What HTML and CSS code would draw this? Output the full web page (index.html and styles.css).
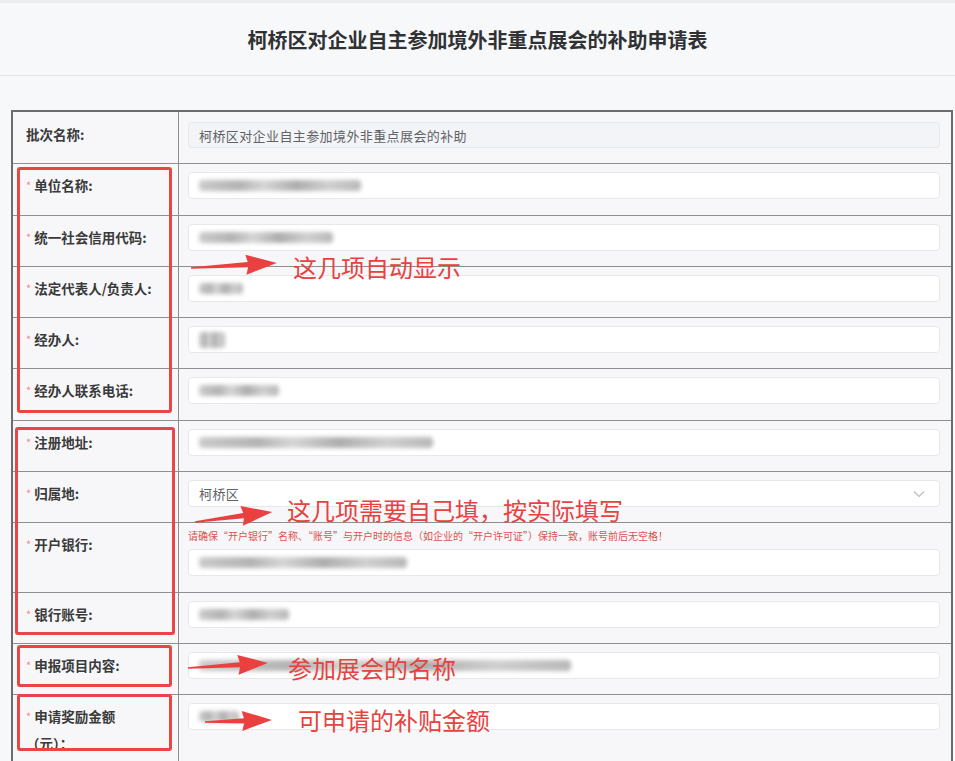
FILE: index.html
```html
<!DOCTYPE html>
<html lang="zh-CN">
<head>
    <meta charset="UTF-8">
    <title>补助申请表</title>
    <link rel="stylesheet" href="styles.css">
</head>
<body>
    <header class="top">
        <h1>柯桥区对企业自主参加境外非重点展会的补助申请表</h1>
    </header>
    <main class="page">
        <table class="form">
            <tr class="first">
                <td class="label">批次名称:</td>
                <td><div class="field readonly">柯桥区对企业自主参加境外非重点展会的补助</div></td>
            </tr>
            <tr>
                <td class="label"><i>*</i>单位名称:</td>
                <td><div class="field"><span class="blur" style="width:162px"></span></div></td>
            </tr>
            <tr>
                <td class="label"><i>*</i>统一社会信用代码:</td>
                <td><div class="field"><span class="blur" style="width:134px"></span></div></td>
            </tr>
            <tr>
                <td class="label"><i>*</i>法定代表人/负责人:</td>
                <td><div class="field"><span class="blur" style="width:44px"></span></div></td>
            </tr>
            <tr>
                <td class="label"><i>*</i>经办人:</td>
                <td><div class="field"><span class="blur short" style="width:26px"></span></div></td>
            </tr>
            <tr>
                <td class="label"><i>*</i>经办人联系电话:</td>
                <td><div class="field"><span class="blur" style="width:80px"></span></div></td>
            </tr>
            <tr>
                <td class="label"><i>*</i>注册地址:</td>
                <td><div class="field"><span class="blur" style="width:234px"></span></div></td>
            </tr>
            <tr>
                <td class="label"><i>*</i>归属地:</td>
                <td>
                    <div class="field select">
                        <span>柯桥区</span>
                        <svg width="12" height="8" viewBox="0 0 12 8"><path d="M1 1.5 L6 6.5 L11 1.5" fill="none" stroke="#b9bcc2" stroke-width="1.2"/></svg>
                    </div>
                </td>
            </tr>
            <tr>
                <td class="label"><i>*</i>开户银行:</td>
                <td>
                    <p class="tip">请确保“开户银行”名称、“账号”与开户时的信息（如企业的“开户许可证”）保持一致，账号前后无空格！</p>
                    <div class="field"><span class="blur" style="width:208px"></span></div>
                </td>
            </tr>
            <tr>
                <td class="label"><i>*</i>银行账号:</td>
                <td><div class="field"><span class="blur" style="width:90px"></span></div></td>
            </tr>
            <tr>
                <td class="label"><i>*</i>申报项目内容:</td>
                <td><div class="field"><span class="blur" style="width:372px"></span></div></td>
            </tr>
            <tr>
                <td class="label"><i>*</i>申请奖励金额<br>（元）：</td>
                <td><div class="field"><span class="blur" style="width:40px"></span></div></td>
            </tr>
        </table>
    </main>

    <div class="notes">
        <div class="box b1"></div>
        <div class="box b2"></div>
        <div class="box b3"></div>
        <div class="box b4"></div>
        <svg class="arrows" width="955" height="761" viewBox="0 0 955 761">
            <g fill="#ea4040">
                <polygon transform="translate(191 268) rotate(-3.4)" points="0,-0.7 57,-2.6 55,-10 86,0 55,10 57,2.6 0,0.7"/>
                <polygon transform="translate(195 522) rotate(-7.4)" points="0,-0.7 49,-2.6 47,-10 78,0 47,10 49,2.6 0,0.7"/>
                <polygon transform="translate(188 668) rotate(-3.6)" points="0,-0.7 52,-2.6 50,-10 80,0 50,10 52,2.6 0,0.7"/>
                <polygon transform="translate(205 722) rotate(-1.7)" points="0,-0.7 39,-2.6 37,-10 67,0 37,10 39,2.6 0,0.7"/>
            </g>
        </svg>
        <p class="note n1">这几项自动显示</p>
        <p class="note n2">这几项需要自己填，按实际填写</p>
        <p class="note n3">参加展会的名称</p>
        <p class="note n4">可申请的补贴金额</p>
    </div>
</body>
</html>
```

FILE: styles.css
```css
body {
    margin: 0;
    padding: 0;
    background-color: #f7f8fa;
    font-family: "Noto Sans CJK SC", "Liberation Sans", sans-serif;
    color: #333;
    position: relative;
    height: 761px;
    overflow: hidden;
}

.top {
    border-top: 3px solid #ececef;
    border-bottom: 1px solid #e3e4e8;
    height: 72px;
    display: flex;
    align-items: center;
    justify-content: center;
}

.top h1 {
    margin: 0;
    font-size: 20px;
    font-weight: 700;
    color: #303133;
}

.page {
    padding: 34px 2px 0 11px;
}

.form {
    width: 942px;
    table-layout: fixed;
    border-collapse: collapse;
    border: 2px solid #6c6c6c;
    background-color: #f7f7f9;
}

.form td {
    border: 1px solid #8f8f8f;
    padding: 8px 11px 15.3px 9px;
    vertical-align: top;
}

.form tr.first td {
    padding-top: 9px;
}

.form td.label {
    width: 142px;
    padding-left: 13px;
    padding-right: 10px;
    font-size: 13.5px;
    font-weight: 700;
    line-height: 27px;
    color: #3a3a3a;
    white-space: nowrap;
}

.label i {
    font-style: normal;
    font-weight: 400;
    color: #f08a8a;
    font-size: 11px;
    margin-right: 3px;
    vertical-align: 1px;
}

.field {
    box-sizing: border-box;
    height: 27px;
    background-color: #fff;
    border: 1px solid #e6e8ec;
    border-radius: 4px;
    padding: 0 11px 0 10px;
    display: flex;
    align-items: center;
    font-size: 13px;
    letter-spacing: 0.4px;
    color: #606266;
}

.field.readonly {
    background-color: #f3f4f7;
    height: 26px;
    margin-top: 1px;
}

.field.select {
    justify-content: space-between;
    padding-right: 14px;
}

.blur {
    display: inline-block;
    height: 11px;
    background: linear-gradient(90deg, #cbcbcb 0%, #b3b3b3 25%, #d6d6d6 40%, #adadad 60%, #d0d0d0 80%, #b8b8b8 100%);
    filter: blur(2px);
    border-radius: 4px;
}

.blur.short {
    height: 16px;
}

.tip {
    margin: -2px 0 6px 0;
    font-size: 10px;
    line-height: 14px;
    color: #e0504e;
    white-space: nowrap;
}

.notes {
    position: absolute;
    left: 0;
    top: 0;
    width: 955px;
    height: 761px;
    pointer-events: none;
}

.box {
    position: absolute;
    border: 3px solid #ea4545;
    border-radius: 3px;
    box-sizing: border-box;
}

.b1 { left: 17px; top: 167px; width: 155px; height: 246px; }
.b2 { left: 15px; top: 427px; width: 160px; height: 208px; }
.b3 { left: 17px; top: 645px; width: 155px; height: 42px; }
.b4 { left: 17px; top: 694px; width: 155px; height: 57px; }

.arrows {
    position: absolute;
    left: 0;
    top: 0;
}

.note {
    position: absolute;
    margin: 0;
    font-size: 24px;
    line-height: 30px;
    color: #e8423f;
    white-space: nowrap;
}

.n1 { left: 293px; top: 252px; }
.n2 { left: 287px; top: 495px; }
.n3 { left: 288px; top: 653px; }
.n4 { left: 298px; top: 705px; }
```
